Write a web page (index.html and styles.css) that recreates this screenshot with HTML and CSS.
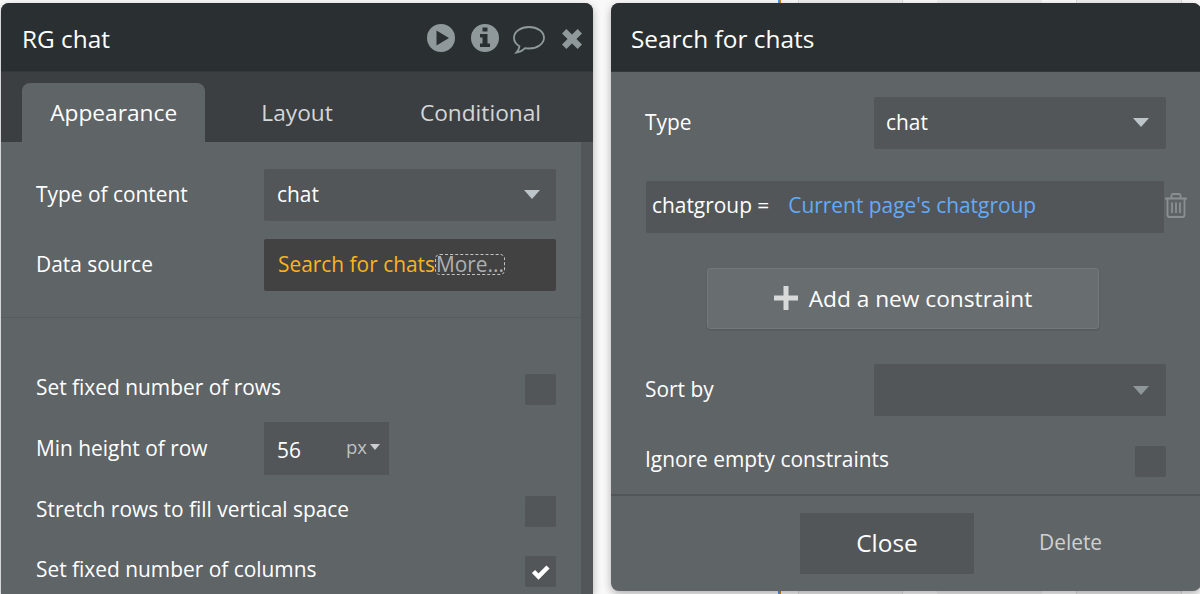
FILE: index.html
```html
<!DOCTYPE html>
<html lang="en">
<head>
    <meta charset="UTF-8">
    <meta name="viewport" content="width=device-width, initial-scale=1.0">
    <link rel="stylesheet" href="styles.css">
    <title>RG chat</title>
</head>
<body>

    <div class="panel editor">
        <div class="header">
            <span class="title">RG chat</span>
            <div class="icons">
                <svg class="icon-play" width="28" height="28" viewBox="0 0 28 28"><path fill-rule="evenodd" d="M14 0a14 14 0 1 0 0 28a14 14 0 1 0 0-28zM9.500 6.500v15L22 14z"/></svg>
                <svg class="icon-info" width="28" height="28" viewBox="0 0 28 28"><path fill-rule="evenodd" d="M14 0a14 14 0 1 0 0 28a14 14 0 1 0 0-28zM11.500 3.500h5v4h-5zM9 10h7.500v9.500h2.500v3.500h-10V19.500h2.500V13.500h-2.500z"/></svg>
                <svg class="icon-comment" width="32" height="28" viewBox="0 0 32 28"><path d="M16 1C24 1 31 5.500 31 11.700S24 22.500 16 22.500Q14 22.500 12 22.200Q8.500 26 3.500 26.500Q6 24 6.500 20.200Q1 17 1 11.700C1 5.500 8 1 16 1z"/></svg>
                <svg class="icon-close" width="22" height="22" viewBox="0 0 22 22"><path d="M3.200 3.200L18.800 18.800M18.800 3.200L3.200 18.800"/></svg>
            </div>
        </div>
        <div class="tabs">
            <div class="tab active">Appearance</div>
            <div class="tab">Layout</div>
            <div class="tab">Conditional</div>
        </div>
        <div class="content">
            <div class="properties">
                <div class="row">
                    <span class="label">Type of content</span>
                    <div class="dropdown">chat<span class="caret"></span></div>
                </div>
                <div class="row">
                    <span class="label">Data source</span>
                    <div class="dropdown composer"><span class="search">Search for chats</span><span class="more">More...</span></div>
                </div>
                <div class="divider"></div>
                <div class="row check-row">
                    <span class="label">Set fixed number of rows</span>
                    <span class="checkbox"></span>
                </div>
                <div class="row height-row">
                    <span class="label">Min height of row</span>
                    <div class="number">56<span class="unit">px<span class="caret small"></span></span></div>
                </div>
                <div class="row check-row">
                    <span class="label">Stretch rows to fill vertical space</span>
                    <span class="checkbox"></span>
                </div>
                <div class="row check-row last-row">
                    <span class="label">Set fixed number of columns</span>
                    <span class="checkbox">
                        <svg class="icon-check" width="20" height="16" viewBox="0 0 20 16"><path d="M2.500 7.500L7.500 12.500L17 3"/></svg>
                    </span>
                </div>
            </div>
            <div class="scrollbar"></div>
        </div>
    </div>

    <div class="panel search-panel">
        <div class="header">
            <span class="title">Search for chats</span>
        </div>
        <div class="search-body">
            <div class="row">
                <span class="label">Type</span>
                <div class="dropdown">chat<span class="caret"></span></div>
            </div>
            <div class="constraint-row">
                <div class="constraint"><span class="key">chatgroup =</span><span class="value">Current page's chatgroup</span></div>
                <svg class="icon-trash" width="22" height="25" viewBox="0 0 22 25"><path d="M0 5.500H22M6.500 5V3Q6.500 1 8.500 1H13.500Q15.500 1 15.500 3V5M2.500 5.500V22Q2.500 24 4.500 24H17.500Q19.500 24 19.500 22V5.500M7 9.500V20M11 9.500V20M15 9.500V20"/></svg>
            </div>
            <div class="add-button">
                <svg class="icon-plus" width="24" height="24" viewBox="0 0 24 24"><path d="M12 0V24M0 12H24"/></svg>
                <span>Add a new constraint</span>
            </div>
            <div class="row">
                <span class="label">Sort by</span>
                <div class="dropdown"><span class="caret dim"></span></div>
            </div>
            <div class="row ignore-row">
                <span class="label">Ignore empty constraints</span>
                <span class="checkbox"></span>
            </div>
        </div>
        <div class="footer">
            <div class="close-button">Close</div>
            <div class="delete-button">Delete</div>
        </div>
    </div>

</body>
</html>
```
FILE: styles.css
```css
:root {
    --header-color: #2a3032;
    --panel-color: #5f6467;
    --field-color: #525658;
    --icon-color: #8f999c;
}

* {
    box-sizing: border-box;
}

/* page canvas with its column guides behind the panels */
body {
    margin: 0;
    height: 594px;
    padding: 3px 0 0 1px;
    overflow: hidden;
    display: flex;
    align-items: flex-start;
    gap: 18px;
    font-family: "Open Sans", sans-serif;
    font-size: 20.9px;
    color: #fff;
    background: linear-gradient(to right,
        #f9f9f9 778px, #4c9be8 778px, #4c9be8 780px, #c98a1c 780px, #c98a1c 781px,
        #f9f9f9 781px, #f9f9f9 798px, #dedede 798px, #dedede 799px, #f0f0f0 799px,
        #f0f0f0 902px, #dedede 902px, #dedede 903px, #fbfbfb 903px, #fbfbfb 937px,
        #f0f0f0 937px, #f0f0f0 1042px, #fbfbfb 1042px, #fbfbfb 1076px, #dedede 1076px,
        #dedede 1077px, #f0f0f0 1077px, #f0f0f0 1181px, #dedede 1181px, #dedede 1182px,
        #fbfbfb 1182px);
}

.panel {
    flex: none;
    background-color: var(--panel-color);
    border-radius: 8px;
    overflow: hidden;
    box-shadow: 0 3px 9px rgba(0, 0, 0, 0.3);
}

.editor {
    width: 592px;
    height: 591px;
    border-radius: 8px 8px 0 0;
}

.search-panel {
    width: 590px;
    height: 588px;
}

.header {
    display: flex;
    align-items: center;
    justify-content: space-between;
    height: 69px;
    padding: 2px 10.5px 0 21px;
    background-color: var(--header-color);
    border-bottom: 1px solid #34393b;
}

.search-panel .header {
    padding-left: 20px;
}

.title {
    font-size: 24.4px;
}

.icons {
    display: flex;
    align-items: center;
    gap: 16px;
}

.icons svg {
    fill: var(--icon-color);
}

.icons .icon-comment {
    margin: 4px 0 0 -2px;
    fill: none;
    stroke: var(--icon-color);
    stroke-width: 1.8;
}

.icons .icon-close {
    margin-top: 2px;
    stroke: var(--icon-color);
    stroke-width: 6.2;
}

.tabs {
    display: flex;
    align-items: flex-end;
    height: 70px;
    padding-left: 21px;
    background-color: #3b3f42;
}

.tab {
    width: 183.4px;
    height: 59px;
    line-height: 59px;
    text-align: center;
    font-size: 22.7px;
    color: #d4d6d7;
}

.tab.active {
    color: #fff;
    background-color: var(--panel-color);
    border-radius: 8px 8px 0 0;
}

.content {
    display: flex;
    height: 452px;
}

.properties {
    flex: 1;
    padding-top: 27px;
}

.scrollbar {
    width: 12px;
    background-color: var(--field-color);
}

.row {
    display: flex;
    align-items: center;
    height: 52px;
    margin-bottom: 18px;
    padding: 0 25px 0 35px;
}

.label {
    width: 228px;
    padding-bottom: 2px;
    white-space: nowrap;
}

.dropdown {
    display: flex;
    align-items: center;
    width: 292px;
    height: 52px;
    padding: 0 16px 2px 13px;
    background-color: var(--field-color);
    border-radius: 2px;
}

.caret {
    margin-left: auto;
    border: 8px solid transparent;
    border-top: 9px solid #bcc5ca;
    border-bottom: none;
}

.caret.dim {
    margin-top: 2px;
    border-top-color: #8d9699;
}

.caret.small {
    margin-top: 2px;
    margin-left: 3px;
    border-width: 6px 5.5px 0;
    border-top-color: #cbcccd;
}

.composer {
    padding-left: 14px;
    background-color: #424242;
}

.search {
    color: #feb31c;
}

.more {
    height: 21px;
    line-height: 19px;
    color: #adb0b3;
    border: 1px dashed #c4c4c4;
    border-radius: 5px;
}

.divider {
    height: 1px;
    margin: 26px 0 44px;
    background-color: #575c5f;
}

.check-row {
    justify-content: space-between;
    margin-bottom: 8px;
}

.checkbox {
    display: flex;
    align-items: center;
    justify-content: center;
    width: 31px;
    height: 31px;
    margin-top: 2px;
    background-color: var(--field-color);
    border-radius: 2px;
}

.icon-check {
    fill: none;
    stroke: #fff;
    stroke-width: 4.5;
}

.height-row {
    height: 53px;
    margin-bottom: 9px;
}

.number {
    display: flex;
    align-items: center;
    justify-content: space-between;
    width: 125px;
    height: 53px;
    padding: 2px 9px 0 13px;
    background-color: var(--field-color);
}

.unit {
    display: flex;
    align-items: center;
    margin-top: -7px;
    font-size: 18.5px;
    color: #bfc1c2;
}

/* bottom row is cut short by the edge of the panel */
.last-row {
    height: 43px;
    margin-bottom: 0;
    align-items: flex-start;
    padding-top: 11px;
}

.last-row .checkbox {
    margin-top: 1px;
}

.search-body {
    height: 422px;
    padding-top: 25px;
}

.search-body .row {
    padding-left: 34px;
    padding-right: 35px;
}

.search-body .row .label {
    width: 229px;
}

.search-body .dropdown {
    padding-right: 17px;
    padding-left: 12px;
}

.constraint-row {
    display: flex;
    align-items: center;
    gap: 1px;
    margin: 32px 0 35px 35px;
}

.constraint {
    width: 518px;
    height: 52px;
    line-height: 49px;
    padding-left: 6px;
    background-color: var(--field-color);
    border-radius: 2px;
}

.value {
    margin-left: 19px;
    color: #63aafa;
}

.icon-trash {
    margin-bottom: 3px;
    fill: none;
    stroke: #8b8f91;
    stroke-width: 1.8;
}

.add-button {
    display: flex;
    align-items: center;
    justify-content: center;
    gap: 11px;
    width: 392px;
    height: 61px;
    margin: 0 0 35px 96px;
    padding-bottom: 1px;
    font-size: 22.7px;
    background-color: #686d70;
    border: 1px solid #73787b;
    border-radius: 3px;
    box-shadow: 0 1px 2px rgba(0, 0, 0, 0.15);
}

.icon-plus {
    stroke: #d8d9d9;
    stroke-width: 5;
}

.search-body .ignore-row {
    justify-content: space-between;
}

.footer {
    display: flex;
    align-items: center;
    height: 97px;
    padding: 0 0 1px 189px;
    border-top: 2px solid var(--field-color);
}

.close-button {
    width: 174px;
    height: 61px;
    line-height: 59px;
    text-align: center;
    font-size: 24.4px;
    background-color: var(--field-color);
}

.delete-button {
    margin-left: 65px;
    padding-bottom: 3px;
    color: #cfd1d1;
}
```
